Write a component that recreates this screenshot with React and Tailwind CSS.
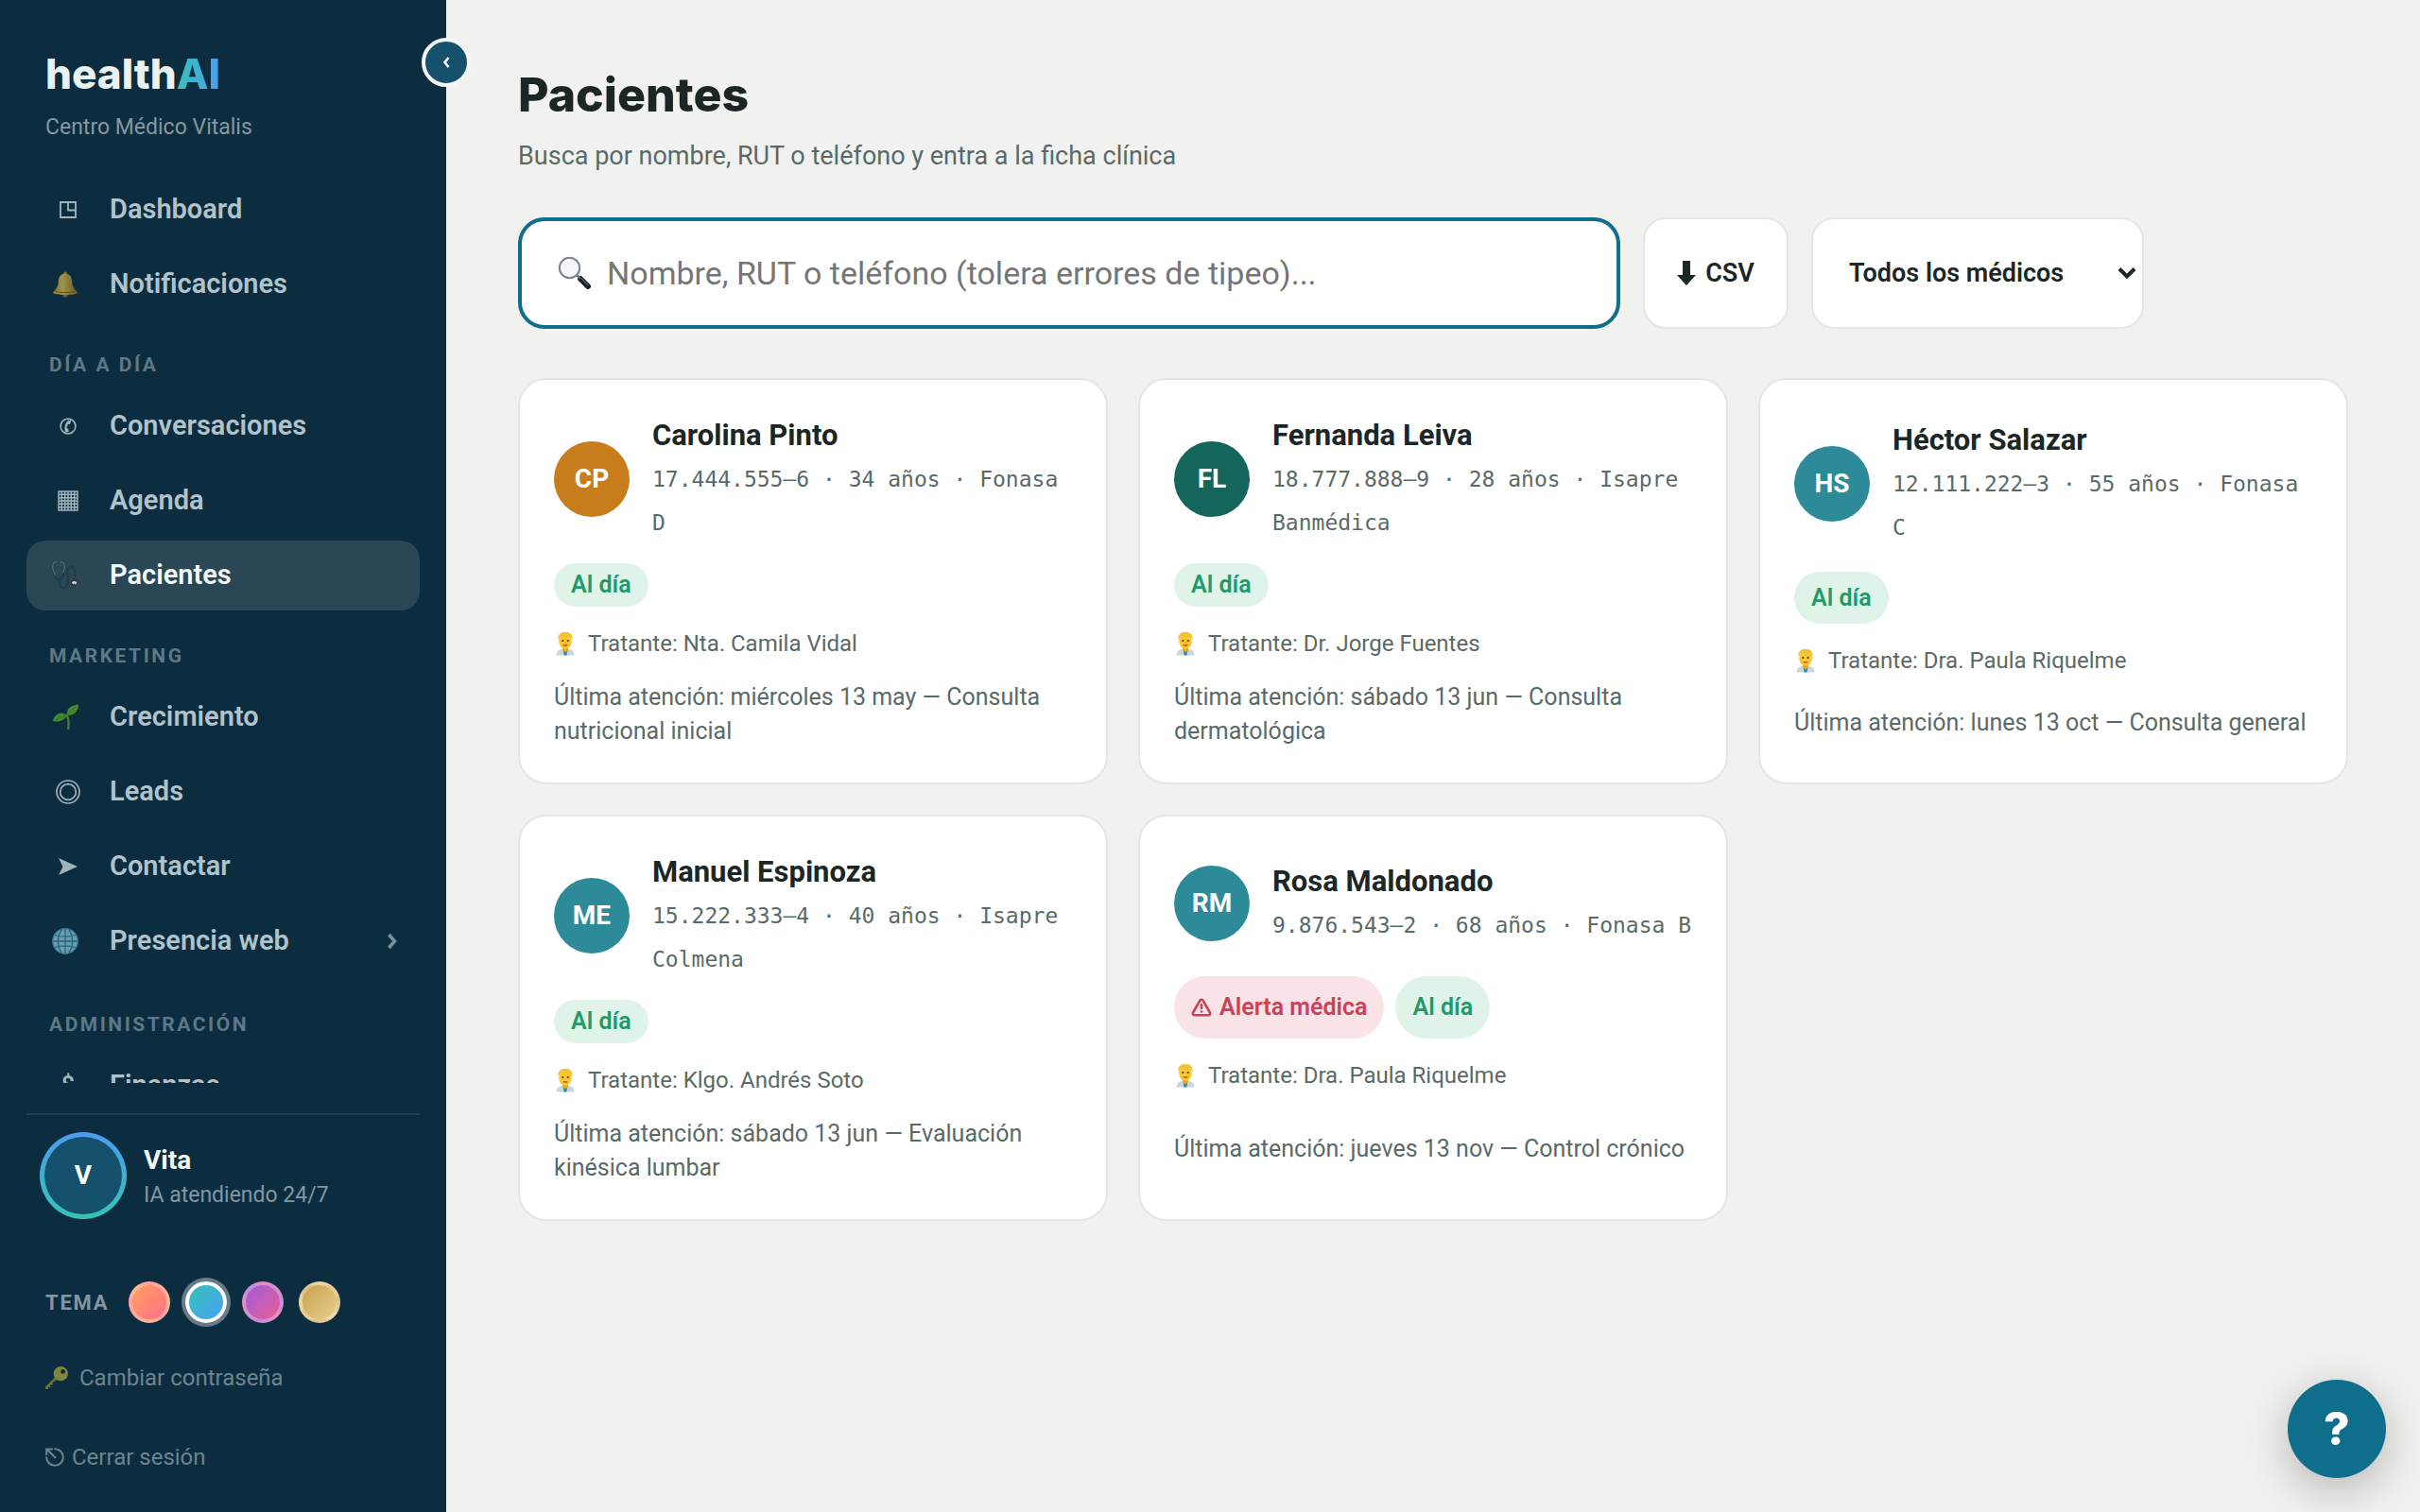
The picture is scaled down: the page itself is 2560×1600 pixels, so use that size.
import React from "react";
import { TriangleAlert } from "lucide-react";

const DashboardIcon = () => (
  <svg viewBox="0 0 18 18" className="size-[18px]" fill="none" stroke="currentColor" strokeWidth="1.8">
    <path d="M1 1h16v16H1zM9 1v8.5h8" />
  </svg>
);

const BellIcon = () => (
  <svg viewBox="0 0 28 28" className="-ml-[7px] size-7 opacity-70">
    <defs>
      <linearGradient id="bell" x1="0" x2="1">
        <stop offset="0" stopColor="#d9a62e" />
        <stop offset=".4" stopColor="#f0cf55" />
        <stop offset="1" stopColor="#a87411" />
      </linearGradient>
    </defs>
    <circle cx="14" cy="2.2" r="1.7" fill="#c99a3a" />
    <circle cx="14" cy="25" r="2.6" fill="#b47a2e" />
    <path d="M14 2.5c-4.6 0-6.800 3.300-7.200 7.800-.4 5.200-1.300 8-5.800 12 0 2 5 2.700 13 2.700s13-.7 13-2.700c-4.500-4-5.400-6.800-5.800-12C20.800 5.800 18.600 2.500 14 2.500z" fill="url(#bell)" />
    <path d="M3.500 21c5 2.200 16 2.200 21 0" stroke="#8f6410" strokeWidth="1" fill="none" />
  </svg>
);

const PhoneIcon = () => (
  <svg viewBox="0 0 18 18" className="size-[18px]" fill="none" stroke="currentColor">
    <circle cx="9" cy="9" r="7.900" strokeWidth="1.600" />
    <path d="M12.200 2.600 8.800 3.300C5.600 6.200 4.800 11 6.200 15.600l3.600-.9-.6-3.200-1.400.2c-.2-2 .3-3.600 1.500-5l1.800.3z" fill="currentColor" stroke="none" />
  </svg>
);

const CalendarIcon = () => (
  <svg viewBox="0 0 22 22" className="size-[22px]" fill="none" stroke="currentColor" strokeWidth="1.500">
    <path d="M1 1h20v20H1zM4.300 1v20M7.700 1v20M11 1v20M14.300 1v20M17.700 1v20M1 4.300h20M1 7.700h20M1 11h20M1 14.300h20M1 17.700h20" />
  </svg>
);

const StethoscopeIcon = () => (
  <svg viewBox="0 0 32 32" className="-ml-[7px] size-8" fill="none" strokeLinecap="round">
    <path d="M4.500 2.500C1 5 2 13 6 18.500c1.800 2.300 4.800 2.300 6.500 0C15.500 14 17 5.500 13.500 2.500" stroke="#1f3743" strokeWidth="1.600" />
    <path d="M3.500 3c-1.800 4-.3 9 2 12.500M14.500 3c1.500 3 1 6.500-.4 9.500M4 2.500l2.500-.8M14 2.500l-2.500-.8" stroke="#6b7f88" strokeWidth="1" />
    <path d="M9.500 20.500c0 11 8 11 9.500 3 1-6-3.500-14 2-16.500 6-1.500 5.500 7 5 13" stroke="#223a46" strokeWidth="1.700" />
    <circle cx="25.500" cy="24" r="4.200" fill="#2f3b42" />
    <path d="M22.800 23.500a3.200 3.200 0 0 1 5.600.3l-1.600 2-.9-1.600-1.400 1.200z" fill="#e3e7e8" />
  </svg>
);

const SeedlingIcon = () => (
  <svg viewBox="0 0 28 28" className="-ml-[7px] size-7 opacity-80">
    <path d="M15.500 11.500c2.500 4 2.500 9 1.700 14.500" stroke="#5ca12c" strokeWidth="2.400" fill="none" strokeLinecap="round" />
    <path d="M16 12C15 5 19.500 1.500 28 .5c0 7-4.500 12-12 11.500z" fill="#5eab2a" />
    <path d="M15.500 12.500C12 7.500 4 8.500.5 18c6.500 1.500 13-.5 15-5.500z" fill="#5eab2a" />
    <path d="M16.500 11.500 25 3M14.500 12.500 3.500 16.500" stroke="#3f8320" strokeWidth=".8" />
  </svg>
);

const RingsIcon = () => (
  <svg viewBox="0 0 26 26" className="size-[26px]" fill="none" stroke="currentColor" strokeWidth="1.700">
    <circle cx="13" cy="13" r="12" />
    <circle cx="13" cy="13" r="8.300" />
  </svg>
);

const SendIcon = () => (
  <svg viewBox="0 0 20 18" className="h-[18px] w-5" fill="currentColor">
    <path d="M0 0 20 9 0 18 4.500 9z" />
  </svg>
);

const GlobeIcon = () => (
  <svg viewBox="0 0 28 28" className="-ml-[7px] size-7 opacity-90">
    <circle cx="14" cy="14" r="13.300" fill="#86b3cb" stroke="#3f8ea4" strokeWidth="1.300" />
    <path d="M14 1v26M1 14h26M3 7.500c6.500 2 15.500 2 22 0M3 20.500c6.500-2 15.500-2 22 0M10.500 1.500c-5.500 7-5.500 18 0 25M17.500 1.500c5.500 7 5.500 18 0 25" fill="none" stroke="#22798f" strokeWidth="1.300" />
  </svg>
);

const DollarIcon = () => <span className="text-[25px] font-semibold leading-[30px]">$</span>;

const KeyIcon = () => (
  <svg viewBox="0 0 24 24" className="size-6">
    <path d="M12 9.500 0 21.500V24h3v-2h2.200v-2.500h2.500V17l6.300-4z" fill="#716f2c" />
    <circle cx="16.300" cy="7.700" r="7.600" fill="#81873a" />
    <circle cx="18.600" cy="5.400" r="2.400" fill="#0c2c3f" />
  </svg>
);

const EscapeIcon = () => (
  <svg viewBox="0 0 20 20" className="size-5" fill="none" stroke="currentColor" strokeWidth="2">
    <path d="M9.500 1.200A8.800 8.800 0 1 1 1.200 9.500M11 11 2.500 2.500M1.200 8V1.500H8" />
  </svg>
);

const SearchIcon = () => (
  <svg viewBox="0 0 36 36" className="size-9 shrink-0">
    <path d="m24 24 8 8" stroke="#1d2124" strokeWidth="6" strokeLinecap="round" />
    <path d="m25 23.500 7 7" stroke="#555b60" strokeWidth="1.200" strokeLinecap="round" />
    <path d="m20 20 3.500 3.500" stroke="#6c747a" strokeWidth="2.500" />
    <circle cx="12.500" cy="12.500" r="10.700" fill="#f3f5f8" stroke="#7b858e" strokeWidth="2" />
    <path d="M4.500 10a9 9 0 0 1 8-6" stroke="#fff" strokeWidth="1.500" fill="none" />
  </svg>
);

const DoctorIcon = () => (
  <svg viewBox="0 0 24 26" className="h-[26px] w-6 shrink-0">
    <path d="M2.500 25.500c.3-4.500 2.500-6 6-6.500h7c3.500.5 5.700 2 6 6.500z" fill="#ccd5de" />
    <path d="M9.500 19.500h5l-1.200 6h-2.600z" fill="#2b87a8" />
    <path d="M9 17h6v3l-3 2.500L9 20z" fill="#e8a81c" />
    <ellipse cx="12" cy="10.500" rx="6.800" ry="8.300" fill="#fcc62e" />
    <path d="M4.500 9.500C3.500 4 7 .8 12 .8S20.500 4 19.500 9.500c-1-1.500-1.500-3-2-4-3 .8-8 .8-11 0-.5 1-1 2.500-2 4z" fill="#efc23c" />
    <circle cx="9.300" cy="10" r="1.100" fill="#4a3113" />
    <circle cx="14.700" cy="10" r="1.100" fill="#4a3113" />
    <path d="M10 14.800h4" stroke="#a2491a" strokeWidth="1.200" strokeLinecap="round" />
  </svg>
);

const DownIcon = () => (
  <svg viewBox="0 0 20 26" className="h-[26px] w-5" fill="currentColor">
    <path d="M6 0h8v15h6L10 26 0 15h6z" />
  </svg>
);

function NavItem({ icon: Icon, label, active, chevron }) {
  return (
    <a
      href="#"
      aria-current={active ? "page" : undefined}
      className={
        active
          ? "flex h-[74px] shrink-0 items-center rounded-[20px] bg-[#2b4654] px-6 text-[29px] font-semibold text-[#f1fafa]"
          : "flex h-[74px] shrink-0 items-center rounded-[20px] px-6 text-[29px] font-semibold text-[#b1c3ca]"
      }
    >
      <span className="flex w-10 shrink-0 items-center justify-center opacity-90">
        <Icon />
      </span>
      <span className="ml-6 flex-1">{label}</span>
      {chevron && (
        <svg viewBox="0 0 10 16" className="h-4 w-[10px] text-[#7b929d]" fill="none" stroke="currentColor" strokeWidth="3.500">
          <path d="m1.500 1 6 7-6 7" />
        </svg>
      )}
    </a>
  );
}

const NavLabel = ({ children }) => (
  <h2 className="mb-2 mt-7 h-[30px] shrink-0 pl-6 text-[21px] font-bold leading-[30px] tracking-[0.12em] text-[#5e7986]">
    {children}
  </h2>
);

const themes = [
  { name: "Coral", active: false, color: "bg-linear-to-br from-[#ff9f5f] to-[#ff6f86] border-white/30" },
  { name: "Océano", active: true, color: "bg-linear-to-br from-[#35c2b4] to-[#4a9ff2] border-white ring-4 ring-[#667d89]" },
  { name: "Violeta", active: false, color: "bg-linear-to-br from-[#a259d9] to-[#e85b94] border-white/30" },
  { name: "Arena", active: false, color: "bg-linear-to-br from-[#c9a050] to-[#e8cf8a] border-white/30" },
];

function Sidebar() {
  return (
    <aside className="sticky top-0 flex h-screen w-[472px] shrink-0 flex-col bg-[#0c2c3f] px-7 pb-[38px] pt-[54px]">
      <button
        type="button"
        aria-label="Contraer menú"
        className="absolute -right-[26px] top-10 flex size-[52px] items-center justify-center rounded-full border-4 border-[#f4f6f6] bg-[#15506c] text-white"
      >
        <svg viewBox="0 0 8 12" className="h-3 w-2" fill="none" stroke="currentColor" strokeWidth="2.600">
          <path d="M6.500 1 2.500 6l4 5" />
        </svg>
      </button>
      <div className="px-5">
        <div className="font-['Inter',sans-serif] text-[44px] font-extrabold leading-[48px] text-[#e9f2f0]">
          health
          <span className="bg-linear-to-r from-[#37c1b7] to-[#4a9cf2] bg-clip-text text-transparent">AI</span>
        </div>
        <p className="mt-[18px] text-[23px] leading-[30px] text-[#8499a3]">Centro Médico Vitalis</p>
      </div>

      <nav className="mt-[35px] flex min-h-0 flex-1 flex-col gap-[5px] overflow-hidden">
        <NavItem icon={DashboardIcon} label="Dashboard" />
        <NavItem icon={BellIcon} label="Notificaciones" />
        <NavLabel>DÍA A DÍA</NavLabel>
        <NavItem icon={PhoneIcon} label="Conversaciones" />
        <NavItem icon={CalendarIcon} label="Agenda" />
        <NavItem icon={StethoscopeIcon} label="Pacientes" active />
        <NavLabel>MARKETING</NavLabel>
        <NavItem icon={SeedlingIcon} label="Crecimiento" />
        <NavItem icon={RingsIcon} label="Leads" />
        <NavItem icon={SendIcon} label="Contactar" />
        <div className="shrink-0 pb-[3px]">
          <NavItem icon={GlobeIcon} label="Presencia web" chevron />
        </div>
        <NavLabel>ADMINISTRACIÓN</NavLabel>
        <NavItem icon={DollarIcon} label="Finanzas" />
      </nav>

      <div className="mt-8 border-t-2 border-[#23414f] pt-[18px]">
        <div className="flex items-center gap-[18px] px-[14px]">
          <div className="size-[92px] shrink-0 rounded-full bg-linear-to-t from-[#36c3b3] to-[#4b9bf0] p-[5px]">
            <div className="flex size-full items-center justify-center rounded-full bg-[#15506c] text-[28px] font-bold text-white">V</div>
          </div>
          <div className="pt-[3px]">
            <div className="text-[28px] font-bold leading-[38px] text-[#f1f7f6]">Vita</div>
            <div className="text-[23px] leading-9 text-[#8297a1]">IA atendiendo 24/7</div>
          </div>
        </div>
        <div className="mt-[66px] flex items-center px-5">
          <span className="w-[88px] text-[22px] font-bold tracking-[0.08em] text-[#8297a1]">TEMA</span>
          <div className="flex gap-4">
            {themes.map((t) => (
              <button
                key={t.name}
                type="button"
                aria-label={"Tema " + t.name}
                aria-pressed={t.active}
                className={"size-11 rounded-full border-4 " + t.color}
              />
            ))}
          </div>
        </div>
        <button type="button" className="mt-[38px] flex h-10 items-center gap-3 px-5 text-[24px] text-[#6d858f]">
          <KeyIcon />
          Cambiar contraseña
        </button>
        <button type="button" className="mt-11 flex h-10 items-center gap-2 px-5 text-[24px] text-[#6d858f]">
          <EscapeIcon />
          Cerrar sesión
        </button>
      </div>
    </aside>
  );
}

const patients = [
  { initials: "CP", tone: "bg-[#c77d1b]", name: "Carolina Pinto", info: "17.444.555–6 · 34 años · Fonasa D", doctor: "Nta. Camila Vidal", last: "miércoles 13 may — Consulta nutricional inicial" },
  { initials: "FL", tone: "bg-[#14665c]", name: "Fernanda Leiva", info: "18.777.888–9 · 28 años · Isapre Banmédica", doctor: "Dr. Jorge Fuentes", last: "sábado 13 jun — Consulta dermatológica" },
  { initials: "HS", tone: "bg-[#2d8a99]", name: "Héctor Salazar", info: "12.111.222–3 · 55 años · Fonasa C", doctor: "Dra. Paula Riquelme", last: "lunes 13 oct — Consulta general" },
  { initials: "ME", tone: "bg-[#2d8a99]", name: "Manuel Espinoza", info: "15.222.333–4 · 40 años · Isapre Colmena", doctor: "Klgo. Andrés Soto", last: "sábado 13 jun — Evaluación kinésica lumbar" },
  { initials: "RM", tone: "bg-[#2d8a99]", name: "Rosa Maldonado", info: "9.876.543–2 · 68 años · Fonasa B", doctor: "Dra. Paula Riquelme", last: "jueves 13 nov — Control crónico", alert: true },
];

function PatientCard({ p }) {
  return (
    <a href="#" className="grid gap-5 rounded-[30px] border-2 border-[#e5e5e1] bg-white p-9 text-[#5a6a66]">
      <div className="flex items-center gap-6">
        <span className={"flex size-20 shrink-0 items-center justify-center rounded-full text-[28px] font-bold text-white " + p.tone}>
          {p.initials}
        </span>
        <div className="min-w-0 flex-1">
          <h3 className="text-[31px] font-bold leading-[46px] text-[#1c2624]">{p.name}</h3>
          <p className="font-['DejaVu_Sans_Mono',monospace] text-[23px] leading-[46px]">{p.info}</p>
        </div>
      </div>
      <div className="flex gap-3">
        {p.alert && (
          <span className="flex min-h-[46px] items-center gap-2 rounded-[34px] bg-[#fae3e7] px-[18px] text-[25px] font-semibold text-[#cc4058]">
            <TriangleAlert className="size-[22px]" strokeWidth={2.8} />
            Alerta médica
          </span>
        )}
        <span className="flex min-h-[46px] items-center rounded-[34px] bg-[#e0f3e9] px-[18px] text-[25px] font-semibold text-[#1f9a68]">
          Al día
        </span>
      </div>
      <p className="flex h-[38px] items-center gap-3 text-[24px]">
        <DoctorIcon />
        Tratante: {p.doctor}
      </p>
      <p className="text-[25px] leading-9">Última atención: {p.last}</p>
    </a>
  );
}

export default function App() {
  return (
    <div className="flex min-h-screen bg-[#f1f1ef] font-['Roboto',sans-serif]">
      <Sidebar />
      <main className="min-w-0 flex-1 px-[76px] pt-[70px]">
        <h1 className="font-['Inter',sans-serif] text-[50px] font-extrabold leading-[60px] text-[#1c2624]">Pacientes</h1>
        <p className="mt-[13px] text-[27px] leading-[44px] text-[#5a6a66]">
          Busca por nombre, RUT o teléfono y entra a la ficha clínica
        </p>

        <div className="mt-[43px] flex h-[118px] max-w-[1720px] gap-6 text-[27px] font-semibold text-[#1c2624]">
          <label className="flex flex-1 items-center gap-4 rounded-[28px] border-4 border-[#0f6e8c] bg-white px-[38px]">
            <SearchIcon />
            <input
              type="search"
              aria-label="Buscar pacientes"
              placeholder="Nombre, RUT o teléfono (tolera errores de tipeo)..."
              className="min-w-0 flex-1 bg-transparent text-[34px] font-normal outline-none placeholder:text-[#757575]"
            />
          </label>
          <button type="button" className="flex w-[154px] shrink-0 items-center justify-center gap-[10px] rounded-3xl border-2 border-[#e5e5e1] bg-white">
            <DownIcon />
            CSV
          </button>
          <div className="relative w-[352px] shrink-0">
            <select aria-label="Médico" className="size-full appearance-none rounded-3xl border-2 border-[#e5e5e1] bg-white pl-[38px] pr-12">
              <option>Todos los médicos</option>
            </select>
            <svg viewBox="0 0 20 14" className="pointer-events-none absolute inset-y-0 right-2 my-auto h-[14px] w-5" fill="none" stroke="currentColor" strokeWidth="4">
              <path d="m2 2.500 8 8 8-8" />
            </svg>
          </div>
        </div>

        <div className="mt-[52px] grid grid-cols-3 gap-8 pb-9">
          {patients.map((p) => (
            <PatientCard key={p.name} p={p} />
          ))}
        </div>
      </main>
      <button
        type="button"
        aria-label="Ayuda"
        className="fixed bottom-9 right-9 flex size-[104px] items-center justify-center rounded-full bg-[#0f6e8c] font-['Inter',sans-serif] text-[48px] font-extrabold text-white shadow-[0_12px_48px_rgba(0,0,0,0.25)]"
      >
        ?
      </button>
    </div>
  );
}
